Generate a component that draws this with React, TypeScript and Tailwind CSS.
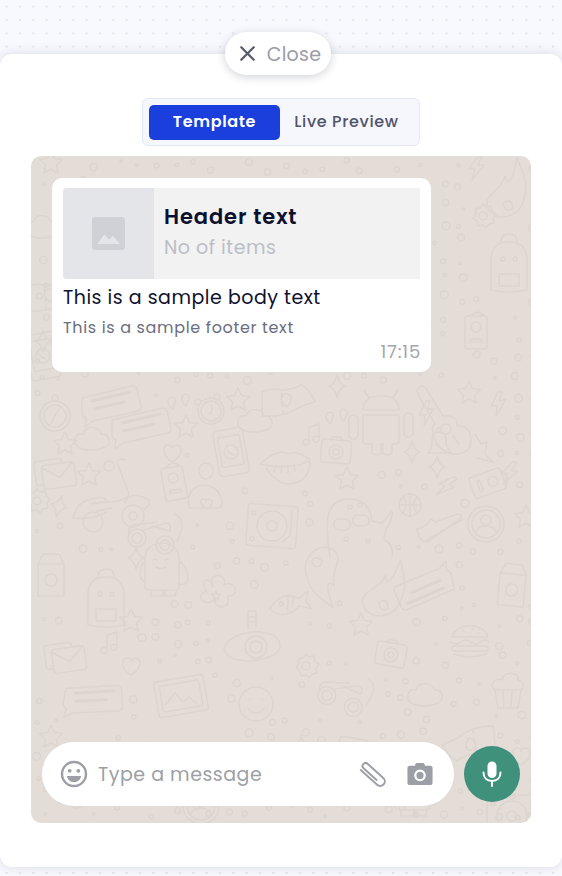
import type { ReactNode } from "react";
import { X } from "lucide-react";

const sans = "font-['Poppins','Inter','Noto_Sans',sans-serif]";

const bubble = (
  <>
    <path d="M-27-8l50-12q4 0 5 3l4 17q0 4-3 5L-16 15l-8 6 1-9q-3-1-4-4z" />
    <path d="M-17-5l38-9M-15 3l30-7" strokeWidth="3" />
  </>
);

const shapes: Record<string, ReactNode> = {
  star: <path d="M0-11l3.500 7.500 8 1-6 5.500 1.500 8L0 7l-7 4 1.500-8-6-5.500 8-1z" />,
  sparkle: <path d="M0-11q2 9 8 11-6 2-8 11-2-9-8-11 6-2 8-11z" />,
  heart: <path d="M0 9c-12-8-9-18-3-17 2 0 3 2 3 3 2-4 9-4 9 2 0 5-4 9-9 12z" />,
  cloud: <path d="M-15 9c-7-6-2-15 5-13 3-9 17-8 18 0 9-1 11 10 4 13-8 4-20 4-27 0z" />,
  bubble,
  compass: (
    <>
      <circle r="15" />
      <circle r="11" />
      <circle cy="-18" r="3" />
      <path d="M4-7L-4 7 0-1z" />
    </>
  ),
  clock: (
    <>
      <circle r="13" />
      <circle r="10" />
      <circle cx="-13" cy="-9" r="3" />
      <circle cx="6" cy="-14" r="3" />
      <path d="M0-6q3 6-2 9" />
    </>
  ),
  phone: (
    <>
      <rect x="-15" y="-23" width="30" height="46" rx="4" />
      <rect x="-11" y="-16" width="22" height="30" rx="2" />
      <circle r="7" />
      <path d="M-3-2q1 4 5 5" />
    </>
  ),
  envelope: (
    <>
      <rect x="-21" y="-13" width="28" height="24" rx="3" />
      <rect x="-14" y="-8" width="33" height="24" rx="3" fill="#e4ddd7" />
      <path d="M-14-6L3 6l15-14" />
    </>
  ),
  scooter: (
    <>
      <path d="M-38 22q4-18 22-20 10-2 12 4 18 0 22-8l-12-32q2-4 8-2" />
      <path d="M-38 22q20 2 34-6" />
      <path d="M-20 8q8-2 16-2M-14 15q8-1 14-3" strokeWidth="2" />
      <circle cx="-18" cy="26" r="10" />
      <circle cx="22" cy="20" r="11" />
      <circle cx="22" cy="20" r="4" />
      <path d="M14 6q6-12 24-2 2 6-5 9" />
      <circle cx="-2" cy="-30" r="5" />
    </>
  ),
  card: (
    <>
      <rect x="-11" y="-16" width="22" height="33" rx="3" />
      <path d="M-8-16l10-4 6 3" />
      <circle cy="-5" r="5" />
      <rect x="-6" y="7" width="12" height="3" rx="1.500" />
    </>
  ),
  person: (
    <>
      <ellipse cy="-23" rx="7" ry="8" />
      <path d="M-17 13c-6-26 30-30 33-5 0 4-2 6-4 6H-16z" />
      <path d="M0 15c-7-5-6-11-2-10 1 0 2 1 2 2 1-3 7-2 6 2-1 3-3 5-6 6z" />
    </>
  ),
  turntable: (
    <>
      <rect x="-24" y="-21" width="50" height="42" rx="3" />
      <circle cx="1" r="15" />
      <circle cx="1" r="5" />
      <path d="M20-16v24l-7 7" />
      <circle cx="-18" cy="-12" r="2" />
      <circle cx="-18" cy="14" r="2" />
    </>
  ),
  glasses: (
    <>
      <circle cx="-14" cy="2" r="9" />
      <circle cx="-14" cy="2" r="5" />
      <circle cx="14" cy="9" r="9" />
      <circle cx="14" cy="9" r="5" />
      <path d="M-7-6l22-7q6 0 4 8l-18-5M-22-2q-2-7 4-9l24-3M24-22q8 4 7 14l-5 14" />
    </>
  ),
  flower: (
    <>
      <path d="M-3-8c-8-14 15-16 11-2 12-6 17 12 3 11 6 12-12 16-12 3-10 10-22-4-8-8-10-8 3-18 6-4z" />
      <path d="M0-4l1.200 3 3 .5-2.200 2 .5 3L0 3l-2.500 1.500.5-3-2.200-2 3-.5z" />
    </>
  ),
  astronaut: (
    <>
      <path d="M-16 22V-8c0-20 34-20 34 0v30c0 3-34 3-34 0z" />
      <path d="M-8-6q2-2 4 0M4-6q2-2 4 0M-5 1q5 3 10 0" />
      <path d="M18-4q8 2 9 18-2 6-9 4M-16-4q-5 2-5 14 1 5 5 5" />
      <path d="M-10 24v6h12l1-6M4 24v6h10l2-6" />
    </>
  ),
  submarine: (
    <>
      <path d="M-32 8c4-20 54-24 56-4 2 16-52 24-56 4z" />
      <circle cy="6" r="11" />
      <circle cy="6" r="6" />
      <path d="M-8-12V-30h8V-14M-8-24h8M-8-19h8" />
    </>
  ),
  fish: (
    <>
      <path d="M-20 4q14-18 30-8l10-6-3 10 5 8-12-4Q-6 18-20 4z" />
      <circle cx="-8" cy="0" r="2" />
      <path d="M0-8l-2 14M5-6l-2 10" />
    </>
  ),
  flame: (
    <>
      <path d="M8-38c8 20 12 26 6 44-4 16-30 22-36 4-3-12 14-14 18-30 2 10 8 6 12-18z" />
      <path d="M-6 8q8-8 10 4-6 6-10-4z" />
    </>
  ),
  android: (
    <>
      <path d="M-18-16q0-14 18-14t18 14z" />
      <path d="M-12-28l-5-8M12-28l5-8" />
      <path d="M-18-11h36v26q0 3-3 3h-4v9q-5 4-9 0v-9h-2v9q-4 4-9 0v-9h-6q-3 0-3-3z" />
      <rect x="-32" y="-11" width="9" height="24" rx="4.500" />
      <rect x="23" y="-13" width="9" height="24" rx="4.500" />
    </>
  ),
  guitar: (
    <>
      <path d="M-34-36q6-8 10 0L-8-10q14-2 14 10 14 0 14 14 0 14-16 14-18-2-22-20-2-8 2-10L-32-30z" />
      <circle cx="-5" cy="3" r="5" />
      <path d="M2 10l6 8" />
      <path d="M24 8l6 10 6-2-2 12 8 8-16-4" />
    </>
  ),
  camera: (
    <>
      <rect x="-15" y="-11" width="30" height="23" rx="3" />
      <circle cy="1" r="7" />
      <circle cy="1" r="3" />
      <path d="M-6-11l2-3h8l2 3" />
    </>
  ),
  lips: (
    <>
      <path d="M-26-2Q-8-18 2-12 12-16 24-6q-8 6-20 6-12 2-30-2z" />
      <path d="M-20 2Q-4 26 16 14 24 8 24-4" />
      <path d="M-10-1l-2 7M-4 0l-1 7M2 0v7M8-1l1 6" />
    </>
  ),
  bell: (
    <>
      <path d="M-11 10q5-6 4-12 0-9 7-9t7 9q0 6 5 12z" />
      <circle cy="-13" r="2" />
    </>
  ),
  note: <path d="M-4 8V-7L6-10V5M-4 8a3 3 0 1 1-1-2M6 5a3 3 0 1 1-1-2" />,
  bolt: <path d="M2-12L-7 1h6l-3 11L8-3H2l4-9z" />,
  ghost: (
    <>
      <path d="M-26 36q-4-22-2-42 6-18 24-16 18 2 20 22l10 2 10-12q2 6-6 18l-2 10q10 6 8 18" />
      <rect x="-22" y="-2" width="16" height="11" rx="5" />
      <rect x="-3" y="-6" width="16" height="11" rx="5" />
      <circle cx="-6" cy="-14" r="2" />
      <circle cx="4" cy="-16" r="2" />
      <circle cx="-10" cy="18" r="2" />
      <circle cx="12" cy="20" r="2" />
    </>
  ),
  user: (
    <>
      <circle r="18" />
      <circle r="14" />
      <circle cy="-4" r="5" />
      <path d="M-11 9q3-7 11-7t11 7" />
    </>
  ),
  shoe: (
    <>
      <path d="M-22 16l-2-8q10-2 14-10l4 3 22-8q6 0 3 5L-12 20q-6 2-10-4z" />
      <path d="M-17 21L22-2" />
    </>
  ),
  ball: (
    <>
      <circle r="11" />
      <path d="M-11 0h22M0-11V11M-7-8q6 8 0 16M7-8q-6 8 0 16" />
    </>
  ),
  map: (
    <>
      <path d="M-33-12q10-4 20 0 14 0 20-4l6 6 6 12q-16 4-30 10-14 2-24 0z" />
      <path d="M-14-9v4M-14 0v4M-14 8v4" />
      <path d="M-9 5q-7-5-5-10t8-2q4 5-3 12z" />
    </>
  ),
  burger: (
    <>
      <path d="M-18-3C-14-18 14-18 18-3z" />
      <path d="M-19 2q5 4 10 0t10 0 9 0 9 0" />
      <rect x="-18" y="6" width="36" height="5" rx="2" />
      <path d="M-16 14q16 6 32 0" />
      <path d="M-7-9h1M2-11h1M8-7h1" />
    </>
  ),
  cupcake: (
    <>
      <path d="M-14 0c-6-10 6-12 8-10 2-10 18-8 16 0 8 2 6 10 2 10z" />
      <path d="M-13 0l3 18h20l3-18M-5 1l1 16M4 1l-1 16" />
    </>
  ),
  carton: (
    <>
      <path d="M-13-12l5-10h16l5 10v32h-26zM-13-12h26" />
      <circle cy="4" r="6" />
    </>
  ),
  backpack: (
    <>
      <path d="M-18 24V-6q0-18 18-18t18 18v30q-18 4-36 0z" />
      <path d="M-10 8h20v12h-20zM-8-24q0-8 8-8t8 8" />
      <circle cx="-6" cy="-7" r="2" />
      <circle cx="6" cy="-7" r="2" />
    </>
  ),
  frame: (
    <>
      <rect x="-25" y="-18" width="50" height="36" rx="3" transform="rotate(-10)" />
      <rect x="-20" y="-13" width="40" height="26" rx="2" transform="rotate(-10)" />
      <path d="M-16 9l10-12 8 9 6-5 8 7" />
    </>
  ),
  smile: (
    <>
      <circle r="17" />
      <path d="M-7-5h1M6-5h1M-8 5q8 8 16 0" />
    </>
  ),
  gear: (
    <>
      <path d="M0-12l3 3 5-1 1 5 4 3-3 4 1 5-5 1-3 4-3-3-5 1-1-5-4-3 3-4-1-5 5-1z" />
      <circle r="4" />
    </>
  ),
  quote: <path d="M-8 5q-6-4-5-9 2-4 6-2 3 3 0 6zM5 2Q0-2 1-7q2-4 6-2 3 3 0 6z" />,
};

// name, x, y, rotation, radius kept clear of dots
const placed: [string, number, number, number, number][] = [
  ["star", 20, 6, 0, 12], ["map", 28, 140, -6, 0], ["cloud", 12, 70, 0, 20], ["phone", 12, 200, -10, 0],
  ["bolt", 445, 12, 0, 12], ["gear", 452, 60, 0, 14], ["flame", 478, 40, 0, 30], ["backpack", 478, 110, 0, 34],
  ["card", 445, 176, 0, 18], ["sparkle", 12, 185, 0, 10],
  ["compass", 24, 260, 0, 22], ["bubble", 78, 250, 0, 32], ["bubble", 108, 272, 0, 32], ["clock", 180, 255, 0, 20],
  ["quote", 150, 248, 0, 12], ["star", 207, 243, 0, 13], ["cloud", 225, 264, 0, 20], ["cloud", 62, 282, 0, 20],
  ["star", 155, 270, 0, 13], ["star", 34, 287, 0, 13], ["star", 58, 318, 0, 13], ["heart", 141, 297, 0, 11],
  ["phone", 200, 296, -10, 30], ["envelope", 25, 316, -8, 26], ["scooter", 80, 340, 0, 44], ["card", 143, 327, -10, 22],
  ["person", 175, 338, 0, 26], ["turntable", 240, 370, 4, 32], ["glasses", 120, 380, 0, 30], ["sparkle", 28, 350, 15, 12],
  ["gear", 6, 345, 0, 14], ["map", 265, 245, -5, 34], ["android", 350, 270, 0, 42], ["guitar", 420, 270, 0, 44],
  ["camera", 305, 295, 5, 20], ["lips", 255, 310, 0, 26], ["bell", 408, 287, 0, 15], ["note", 282, 278, 0, 10],
  ["bolt", 395, 257, -10, 12], ["bolt", 467, 248, -10, 13], ["bolt", 478, 317, 10, 10], ["ghost", 325, 365, 0, 42],
  ["user", 455, 368, 0, 22], ["shoe", 410, 365, 0, 24], ["ball", 379, 349, 0, 13], ["quote", 308, 263, 0, 12],
  ["star", 438, 236, 0, 14], ["star", 316, 322, 0, 13], ["sparkle", 381, 296, 0, 12], ["sparkle", 406, 311, 0, 11],
  ["sparkle", 306, 230, 0, 9], ["card", 457, 327, 70, 20], ["bolt", 415, 330, 30, 14], ["star", 495, 360, 0, 12],
  ["flower", 185, 439, 0, 22], ["astronaut", 130, 410, 0, 32], ["submarine", 225, 485, 0, 36], ["fish", 258, 447, -5, 22],
  ["flame", 290, 415, 150, 30], ["sparkle", 105, 402, 0, 11], ["star", 100, 464, 0, 11], ["note", 80, 486, 0, 10],
  ["carton", 20, 420, 0, 28], ["backpack", 75, 445, 0, 36], ["burger", 439, 484, 0, 24], ["cupcake", 477, 534, 0, 24],
  ["flame", 355, 440, 10, 30], ["carton", 481, 430, 5, 24], ["bubble", 395, 430, 170, 30], ["star", 330, 468, 0, 12],
  ["gear", 275, 510, 0, 13], ["camera", 360, 498, 10, 20], ["frame", 150, 540, 0, 34], ["smile", 225, 548, 0, 20],
  ["envelope", 35, 500, -8, 26], ["bubble", 60, 545, 10, 30], ["glasses", 310, 540, 10, 28], ["cloud", 395, 538, 0, 20],
  ["heart", 100, 510, 0, 11], ["map", 430, 588, 170, 32], ["phone", 320, 605, 10, 28], ["lips", 120, 600, 0, 24],
  ["star", 20, 580, 0, 12], ["fish", 220, 610, 0, 20], ["flower", 40, 640, 0, 20], ["astronaut", 380, 630, 0, 0],
  ["sparkle", 270, 590, 0, 10], ["heart", 490, 600, 0, 10], ["turntable", 480, 660, 0, 0], ["user", 170, 650, 0, 0],
];

// fixed scatter of little rings between the drawings
function scatter() {
  const out: { x: number; y: number; r: number }[] = [];
  for (let y = 4; y < 667; y += 19) {
    for (let x = 4; x < 500; x += 19) {
      const h = Math.abs(Math.sin(x * 12.9898 + y * 78.233) * 43758.5453) % 1;
      const k = Math.abs(Math.sin(x * 39.346 + y * 11.135) * 24634.6345) % 1;
      const px = x + h * 12;
      const py = y + k * 12;
      const clear = placed.every(([, ax, ay, , rad]) => Math.hypot(px - ax, py - ay) > rad + 4);
      if (clear && h + k > 0.55) out.push({ x: px, y: py, r: 1.2 + ((h * 7) % 1) * 2.8 });
    }
  }
  return out;
}

function Doodles() {
  return (
    <svg className="absolute inset-0 h-full w-full" aria-hidden="true">
      <g fill="none" stroke="#dcd5ce" strokeWidth="1.500" strokeLinecap="round" strokeLinejoin="round">
        {scatter().map((d, i) => (
          <circle key={i} cx={d.x} cy={d.y} r={d.r} />
        ))}
        {placed.map(([name, x, y, rot], i) => (
          <g key={i} transform={`translate(${x} ${y}) rotate(${rot})`}>
            {shapes[name]}
          </g>
        ))}
      </g>
    </svg>
  );
}

function ImagePlaceholder() {
  return (
    <svg width="33" height="33" viewBox="0 0 33 33" aria-hidden="true">
      <rect width="33" height="33" rx="3" fill="#cfd1d6" />
      <path d="M5 27l7.500-9.500 4.500 5 4-3.500L28 27z" fill="#e4e5e9" />
    </svg>
  );
}

function SmileIcon() {
  return (
    <svg width="28" height="28" viewBox="0 0 28 28" fill="none" aria-hidden="true">
      <circle cx="14" cy="14" r="12" stroke="#9ca0a6" strokeWidth="2.400" />
      <circle cx="9.700" cy="10.800" r="1.900" fill="#9ca0a6" />
      <circle cx="18.300" cy="10.800" r="1.900" fill="#9ca0a6" />
      <path d="M7 16h14c-.6 4-3.400 6-7 6s-6.400-2-7-6z" fill="#9ca0a6" />
    </svg>
  );
}

function ClipIcon() {
  return (
    <svg width="30" height="30" viewBox="-15 -15 30 30" fill="none" aria-hidden="true">
      <path
        transform="rotate(42) scale(.92)"
        d="M8 1.500H-11a3.250 3.250 0 0 1 0-6.500H12a5 5 0 0 1 0 10H-12"
        stroke="#9ca0a6"
        strokeWidth="2.100"
        strokeLinecap="round"
        strokeLinejoin="round"
      />
    </svg>
  );
}

function CameraIcon() {
  return (
    <svg width="26" height="24" viewBox="0 0 28 26" aria-hidden="true">
      <path
        fillRule="evenodd"
        d="M9 2.500C9.300 1.500 10 1 11 1h6c1 0 1.700.5 2 1.500L19.500 4H25c1.600 0 2.600 1 2.600 2.500v16c0 1.500-1 2.500-2.600 2.500H3c-1.600 0-2.600-1-2.600-2.500v-16C.4 5 1.400 4 3 4h5.500zM14 8.200a6.300 6.300 0 1 0 0 12.600 6.300 6.300 0 0 0 0-12.600zm0 2.400a3.900 3.900 0 1 1 0 7.800 3.900 3.900 0 0 1 0-7.800z"
        fill="#9ca0a6"
      />
    </svg>
  );
}

function MicIcon() {
  return (
    <svg width="20" height="26" viewBox="0 0 20 26" fill="none" aria-hidden="true">
      <rect x="5.500" y="0.500" width="9" height="16.500" rx="4.500" fill="#fff" />
      <path d="M1.500 11.500c0 5.500 3.600 8.500 8.500 8.500s8.500-3 8.500-8.500M10 20v5" stroke="#fff" strokeWidth="2" strokeLinecap="round" />
    </svg>
  );
}

export default function App() {
  return (
    <div className={`${sans} relative h-[876px] w-[562px] overflow-hidden bg-[#f8f9fe] bg-[radial-gradient(#e3e4ea_1px,transparent_1.2px)] bg-[size:13.33px_13.33px] pt-[54px] pb-[9px]`}>
      <button className="absolute left-[225px] top-[32px] z-10 flex h-[43px] w-[106px] items-center justify-center gap-[7px] rounded-full bg-white shadow-[0_2px_10px_rgba(30,35,60,0.2)]">
        <X size={25} color="#5a5d6c" strokeWidth={2.2} />
        <span className="pt-[3px] text-[19px] tracking-[0.25px] text-[#9a9ca6]">Close</span>
      </button>

      <div className="flex h-full flex-col items-center rounded-xl bg-white pt-[44px] shadow-[0_0_12px_rgba(30,35,70,0.14)]">
        <div className="flex h-[48px] w-[278px] items-center rounded-md border border-[#e2e7fa] bg-[#f6f7fd] pl-[6px]">
          <div className="flex h-[35px] w-[131px] items-center justify-center rounded-[5px] bg-[#1a3fdc] text-[16px] font-semibold tracking-[0.65px] text-white">
            Template
          </div>
          <div className="flex-1 pr-[6px] text-center text-[16px] font-medium tracking-[0.65px] text-[#51546a]">Live Preview</div>
        </div>

        <div className="relative mt-[10px] flex h-[667px] w-[500px] flex-col justify-between overflow-hidden rounded-[10px] bg-[#e4ddd7] pb-[17px] pl-[11px] pr-[11px] pt-[22px]">
          <Doodles />

          <div className="relative ml-[10px] flex h-[194px] w-[379px] flex-col rounded-[10px] bg-white px-[11px] pt-[10px]">
            <div className="flex h-[91px] w-[357px] overflow-hidden rounded-tl-[4px] rounded-bl-[4px] bg-[#f2f2f3]">
              <div className="flex h-full w-[91px] items-center justify-center bg-[#e4e5e9]">
                <ImagePlaceholder />
              </div>
              <div className="flex flex-col pl-[10px] pt-[15px]">
                <span className="text-[21px] leading-[28px] font-semibold tracking-[0.9px] text-[#0c0f2e]">Header text</span>
                <span className="mt-[4px] text-[19px] leading-[26px] tracking-[0.5px] text-[#bcbec6]">No of items</span>
              </div>
            </div>
            <p className="mt-[6px] text-[19px] leading-[26px] tracking-[0.5px] text-[#0e1130]">This is a sample body text</p>
            <p className="mt-[7px] text-[16px] leading-[20px] tracking-[0.65px] text-[#6b6e80]">This is a sample footer text</p>
            <span className="mt-[2px] mr-[-1px] self-end text-[18px] leading-[24px] tracking-[0.8px] text-[#a3a5ae]">17:15</span>
          </div>

          <div className="relative flex items-center justify-between">
            <div className="flex h-[64px] w-[412px] items-center rounded-full bg-white pl-[18px] pr-[21px]">
              <SmileIcon />
              <span className="ml-[10px] flex-1 pt-[2px] text-[19px] tracking-[0.5px] text-[#9ca0a6]">Type a message</span>
              <ClipIcon />
              <span className="ml-[20px]">
                <CameraIcon />
              </span>
            </div>
            <div className="flex h-[56px] w-[56px] items-center justify-center rounded-full bg-[#40917c]">
              <MicIcon />
            </div>
          </div>
        </div>
      </div>
    </div>
  );
}
